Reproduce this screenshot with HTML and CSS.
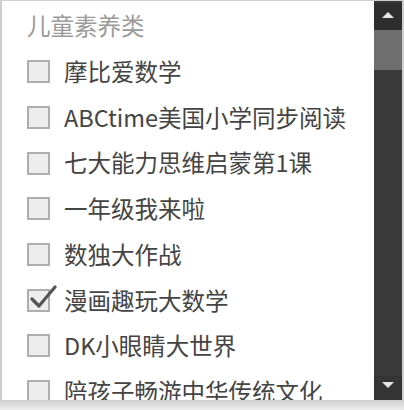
FILE: index.html
```html
<!DOCTYPE html>
<html lang="zh">
<head>
<meta charset="utf-8">
<link rel="stylesheet" href="styles.css">
</head>
<body>
<div class="frame">
  <div class="list">
    <div class="title">儿童素养类</div>
    <div class="row"><span class="box"></span><span class="label">摩比爱数学</span></div>
    <div class="row"><span class="box"></span><span class="label">ABCtime美国小学同步阅读</span></div>
    <div class="row"><span class="box"></span><span class="label">七大能力思维启蒙第1课</span></div>
    <div class="row"><span class="box"></span><span class="label">一年级我来啦</span></div>
    <div class="row"><span class="box"></span><span class="label">数独大作战</span></div>
    <div class="row"><span class="box checked"><svg class="tick" viewBox="0 0 30 26" width="30" height="26"><path d="M4 14 L11 21 L27 2" fill="none" stroke="#555" stroke-width="3.2" stroke-linecap="round" stroke-linejoin="round"/></svg></span><span class="label">漫画趣玩大数学</span></div>
    <div class="row"><span class="box"></span><span class="label">DK小眼睛大世界</span></div>
    <div class="row"><span class="box"></span><span class="label">陪孩子畅游中华传统文化</span></div>
  </div>
  <div class="scrollbar">
    <div class="btn up"><span class="tri-up"></span></div>
    <div class="thumb"></div>
    <div class="track"></div>
    <div class="btn down"><span class="tri-down"></span></div>
  </div>
</div>
<div class="shadow"></div>
</body>
</html>
```
FILE: styles.css
```css
html, body {
  margin: 0;
  padding: 0;
  background: #fff;
}
body {
  width: 404px;
  height: 410px;
  overflow: hidden;
  font-family: "Noto Sans CJK SC", "Noto Sans", sans-serif;
}
.frame {
  display: flex;
  height: 399px;
  border-top: 1px solid #cfcfcf;
  border-left: 2px solid #cfcfcf;
  border-right: 2px solid #cfcfcf;
  box-sizing: content-box;
  width: 400px;
}
.list {
  flex: 1;
  overflow: hidden;
  padding-left: 25px;
}
.title {
  height: 48px;
  line-height: 49px;
  font-size: 23.5px;
  color: #9a9a9a;
}
.row {
  height: 45.7px;
  display: flex;
  align-items: center;
  gap: 14px;
  font-size: 23.5px;
  color: #444;
  white-space: nowrap;
}
.box {
  position: relative;
  flex: none;
  width: 19px;
  height: 19px;
  border: 2px solid #aeaeae;
  background: #ededed;
}
.tick {
  position: absolute;
  left: -1px;
  top: -6px;
}
.label {
  line-height: 1;
}
.scrollbar {
  width: 28px;
  display: flex;
  flex-direction: column;
  background: #3a3a3a;
  padding-top: 2px;
}
.btn {
  background: #2e2e2e;
  display: flex;
  justify-content: center;
}
.up {
  height: 27px;
  align-items: center;
}
.down {
  height: 24px;
  align-items: center;
  background: #353535;
}
.tri-up {
  width: 0;
  height: 0;
  border-left: 6px solid transparent;
  border-right: 6px solid transparent;
  border-bottom: 6px solid #e6e6e6;
  margin-top: -4px;
}
.tri-down {
  width: 0;
  height: 0;
  border-left: 6px solid transparent;
  border-right: 6px solid transparent;
  border-top: 6px solid #e6e6e6;
  margin-top: -6px;
}
.thumb {
  height: 40px;
  background: #6e6e6e;
}
.track {
  flex: 1;
}
.shadow {
  height: 10px;
  background: linear-gradient(#cfcfcf, #ececec);
}
```
